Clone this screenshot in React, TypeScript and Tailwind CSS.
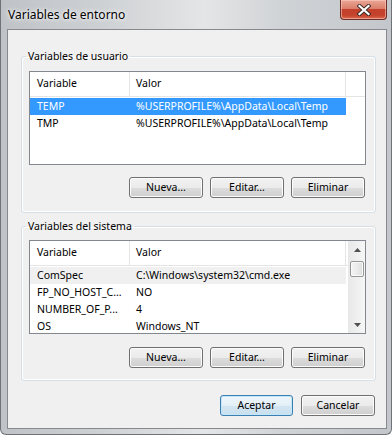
import React from "react";

function Button({ label, primary }: { label: string; primary?: boolean }) {
  return (
    <div
      className={
        primary
          ? "w-[73px] h-[21px] rounded-[3px] border border-[#3c7fb1] flex items-center justify-center text-[10.5px] leading-none text-black bg-[linear-gradient(to_bottom,#eef6fb_0%,#e3eff7_50%,#d3e6f2_50%,#c9e0ee_100%)] shadow-[inset_0_0_0_1px_#c3e6fa]"
          : "w-[74px] h-[21px] rounded-[3px] border border-[#707070] flex items-center justify-center text-[10.5px] leading-none text-black bg-[linear-gradient(to_bottom,#f2f2f2_0%,#ebebeb_50%,#dddddd_50%,#cfcfcf_100%)] shadow-[inset_0_0_0_1px_#fcfcfc]"
      }
    >
      {label}
    </div>
  );
}

function Header() {
  return (
    <div className="flex h-[25px] border-b border-[#e5e5e5] bg-white shrink-0">
      <div className="w-[100px] shrink-0 border-r border-[#e5e5e5] pl-[7px] flex items-center">Variable</div>
      <div className="w-[216px] shrink-0 border-r border-[#e5e5e5] pl-[6px] flex items-center">Valor</div>
      <div className="flex-1" />
    </div>
  );
}

type Row = { name: string; value: string; state?: "sel" | "gray" };

function Rows({ rows }: { rows: Row[] }) {
  return (
    <div className="mt-[1px] flex flex-col">
      {rows.map((r) => (
        <div
          key={r.name}
          className={
            r.state === "sel"
              ? "flex h-[17px] w-[316px] shrink-0 items-center leading-[17px] bg-[#3399ff] text-white"
              : r.state === "gray"
              ? "flex h-[17px] w-[316px] shrink-0 items-center leading-[17px] bg-[#f0f0f0] text-black"
              : "flex h-[17px] w-[316px] shrink-0 items-center leading-[17px] text-black"
          }
        >
          <div className="w-[100px] shrink-0 pl-[7px] whitespace-nowrap">{r.name}</div>
          <div className="pl-[6px] whitespace-nowrap">{r.value}</div>
        </div>
      ))}
    </div>
  );
}

function ScrollBar() {
  return (
    <div className="w-[17px] shrink-0 flex flex-col items-center bg-[linear-gradient(to_right,#e9e9e9,#f6f6f6)] border-l border-[#e8e8e8]">
      <div className="h-[17px] w-full flex items-center justify-center shrink-0">
        <svg width="7" height="4" viewBox="0 0 7 4">
          <path d="M0 4 L3.5 0 L7 4 Z" fill="#505050" />
        </svg>
      </div>
      <div className="mt-[3px] w-[14px] h-[16px] shrink-0 rounded-[2px] border border-[#979797] bg-[linear-gradient(to_right,#f5f5f5,#ececec_50%,#dcdcdc)] shadow-[inset_0_0_0_1px_#fafafa]" />
      <div className="flex-1" />
      <div className="h-[17px] w-full flex items-center justify-center shrink-0">
        <svg width="7" height="4" viewBox="0 0 7 4">
          <path d="M0 0 L3.5 4 L7 0 Z" fill="#505050" />
        </svg>
      </div>
    </div>
  );
}

function Group({
  title,
  children,
  className,
}: {
  title: string;
  children: React.ReactNode;
  className: string;
}) {
  return (
    <fieldset className={className}>
      <legend className="ml-[-3px] px-[2px] h-[16px] leading-[16px] text-[10.5px]">{title}</legend>
      {children}
    </fieldset>
  );
}

export default function App() {
  const userRows: Row[] = [
    { name: "TEMP", value: "%USERPROFILE%\\AppData\\Local\\Temp", state: "sel" },
    { name: "TMP", value: "%USERPROFILE%\\AppData\\Local\\Temp" },
  ];
  const sysRows: Row[] = [
    { name: "ComSpec", value: "C:\\Windows\\system32\\cmd.exe", state: "gray" },
    { name: "FP_NO_HOST_C...", value: "NO" },
    { name: "NUMBER_OF_P...", value: "4" },
    { name: "OS", value: "Windows_NT" },
  ];

  return (
    <div className="w-[392px] h-[435px] flex flex-col overflow-hidden font-['Noto_Sans',sans-serif] text-[10.5px] text-black bg-[linear-gradient(to_right,#bfc3c7_0%,#cdd0d3_25%,#e4e5e6_52%,#d0d3d6_72%,#c3c7cb_100%)] border-l border-r border-b border-[#6f7377] rounded-b-[6px]">
      {/* Title bar */}
      <div className="h-[29px] shrink-0 flex items-start justify-between">
        <div className="pl-[7px] h-[29px] flex items-center text-[12px] [text-shadow:0_0_6px_#ffffff,0_0_3px_#ffffff]">
          Variables de entorno
        </div>
        <div className="mr-[4px] w-[47px] h-[20px] rounded-b-[4px] border border-t-0 border-[#6b2f25] flex items-center justify-center bg-[linear-gradient(to_bottom,#eaa797_0%,#db7f6b_45%,#c3402a_50%,#c4432c_80%,#d9664f_100%)] shadow-[inset_0_0_0_1px_rgba(255,210,200,0.55)]">
          <svg width="14" height="12" viewBox="0 0 14 12">
            <path d="M2.5 2 L11.5 10 M11.5 2 L2.5 10" stroke="#3b2a28" strokeWidth="4" strokeLinecap="square" />
            <path d="M2.5 2 L11.5 10 M11.5 2 L2.5 10" stroke="#ffffff" strokeWidth="2.2" strokeLinecap="square" />
          </svg>
        </div>
      </div>

      {/* Client area */}
      <div className="flex-1 ml-[6px] mr-[4px] mb-[5px] border border-[#868a8e] bg-[#f0f0f0] flex flex-col pt-[18px] pl-[13px] pr-[10px]">
        <Group
          title="Variables de usuario"
          className="border border-[#d5dfe5] rounded-[3px] shadow-[inset_0_0_0_1px_#ffffff] pt-[7px] pl-[7px] pr-[9px] pb-[14px] flex flex-col"
        >
          <div className="h-[94px] border border-[#828790] bg-white flex flex-col overflow-hidden">
            <Header />
            <Rows rows={userRows} />
          </div>
          <div className="mt-[12px] flex justify-end gap-[7px] mr-[1px]">
            <Button label="Nueva..." />
            <Button label="Editar..." />
            <Button label="Eliminar" />
          </div>
        </Group>

        <Group
          title="Variables del sistema"
          className="mt-[5px] border border-[#d5dfe5] rounded-[3px] shadow-[inset_0_0_0_1px_#ffffff] pt-[6px] pl-[7px] pr-[9px] pb-[12px] flex flex-col"
        >
          <div className="h-[94px] border border-[#828790] bg-white flex overflow-hidden">
            <div className="flex-1 flex flex-col overflow-hidden">
              <Header />
              <Rows rows={sysRows} />
            </div>
            <ScrollBar />
          </div>
          <div className="mt-[13px] flex justify-end gap-[7px] mr-[1px]">
            <Button label="Nueva..." />
            <Button label="Editar..." />
            <Button label="Eliminar" />
          </div>
        </Group>

        <div className="mt-[14px] flex justify-end gap-[8px] mr-[1px]">
          <Button label="Aceptar" primary />
          <Button label="Cancelar" />
        </div>
      </div>
    </div>
  );
}
